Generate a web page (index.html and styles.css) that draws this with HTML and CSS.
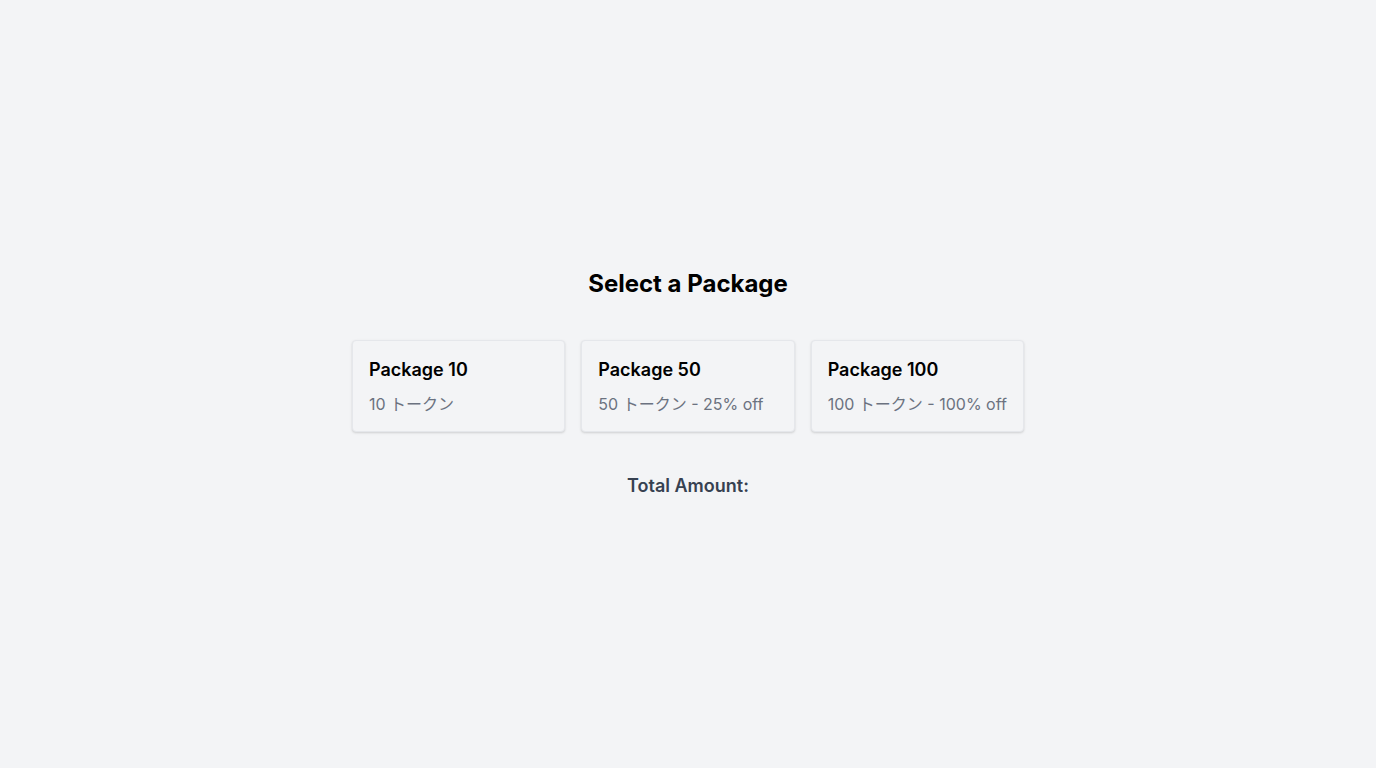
FILE: index.html
```html
<!DOCTYPE html>
<html lang="ja">
<head>
<meta charset="utf-8">
<title>Select a Package</title>
<link rel="stylesheet" href="styles.css">
</head>
<body>
<main class="page">
  <div class="content">
    <h1 class="heading">Select a Package</h1>
    <div class="cards">
      <div class="card">
        <h2 class="card-title">Package 10</h2>
        <p class="card-sub">10 トークン</p>
      </div>
      <div class="card">
        <h2 class="card-title">Package 50</h2>
        <p class="card-sub">50 トークン - 25% off</p>
      </div>
      <div class="card">
        <h2 class="card-title">Package 100</h2>
        <p class="card-sub">100 トークン - 100% off</p>
      </div>
    </div>
    <p class="total">Total Amount:</p>
  </div>
</main>
</body>
</html>
```
FILE: styles.css
```css
* { box-sizing: border-box; }
html, body { margin: 0; padding: 0; }
body {
  background: #f3f4f6;
  font-family: Inter, "Noto Sans CJK JP", sans-serif;
  color: #000;
}
.page {
  min-height: 100vh;
  display: flex;
  align-items: center;
  justify-content: center;
}
.content {
  display: flex;
  flex-direction: column;
  align-items: center;
}
.heading {
  margin: 0 0 40px;
  font-size: 24px;
  line-height: 32px;
  font-weight: 700;
}
.cards {
  width: 672px;
  display: grid;
  grid-template-columns: repeat(3, 1fr);
  gap: 16px;
}
.card {
  padding: 15px 16px 15px;
  border: 1px solid #e5e7eb;
  border-radius: 4px;
  background: #f3f4f6;
  box-shadow: 0 1px 3px rgba(0,0,0,0.1), 0 1px 2px rgba(0,0,0,0.06);
}
.card-title {
  margin: 0;
  font-size: 18px;
  line-height: 28px;
  font-weight: 600;
}
.card-sub {
  margin: 8px 0 0;
  font-size: 16px;
  line-height: 24px;
  color: #6b7280;
  white-space: nowrap;
}
.total {
  margin: 40px 0 0;
  font-size: 18px;
  line-height: 28px;
  font-weight: 600;
  color: #374151;
}
```
